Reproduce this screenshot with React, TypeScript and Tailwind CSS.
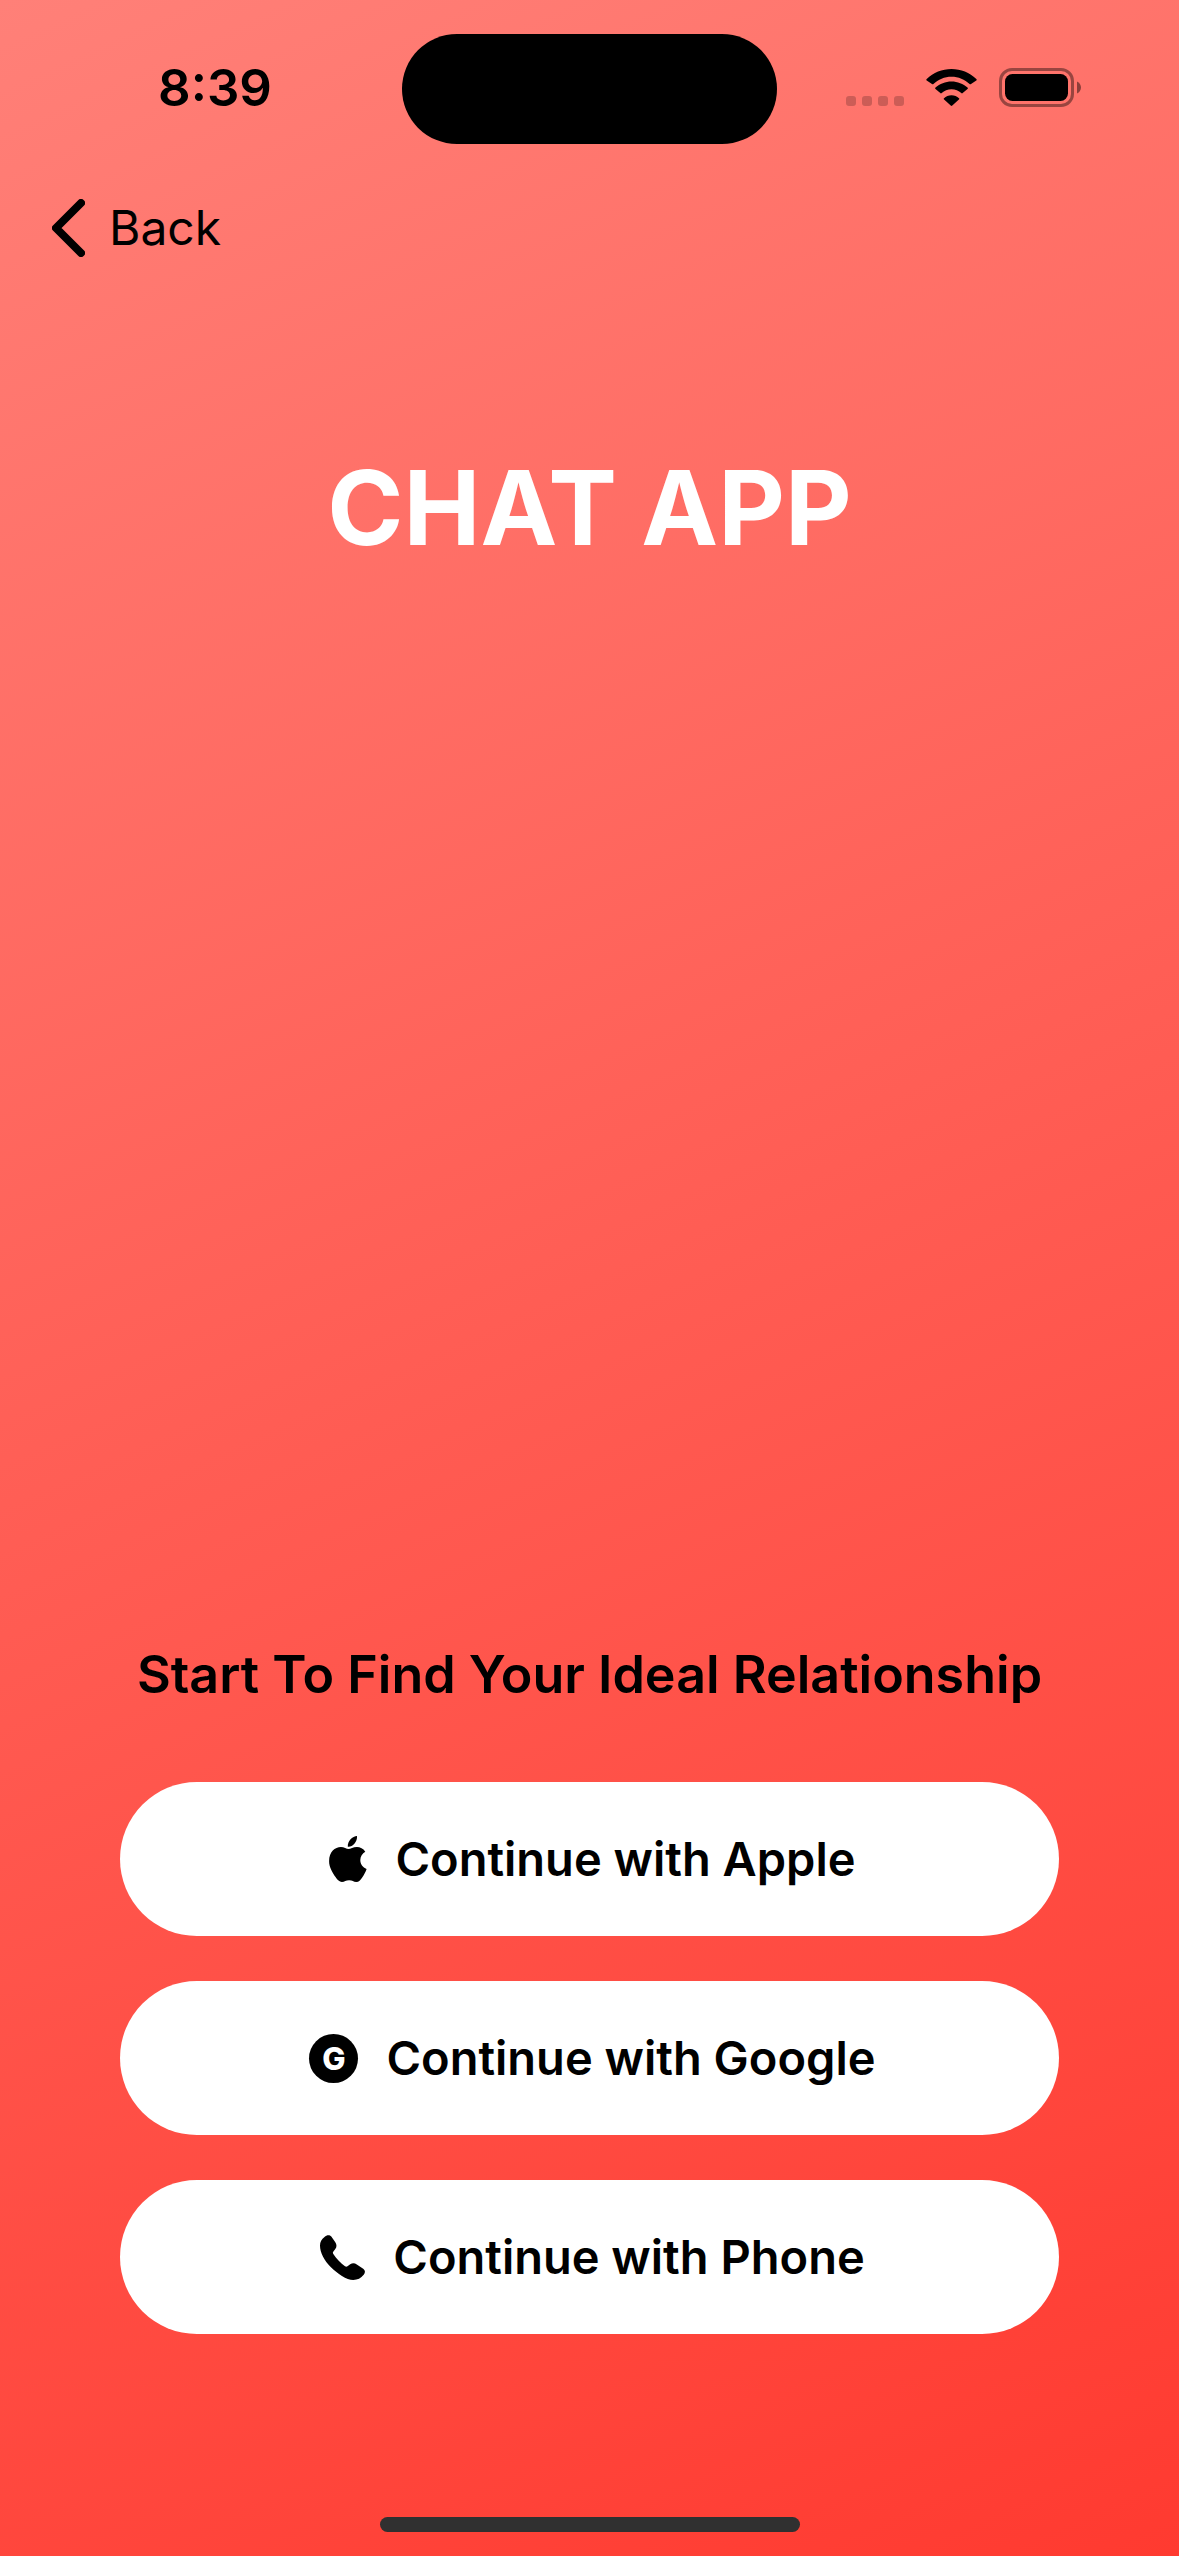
import type { ReactNode } from "react";

function AppleIcon() {
  return (
    <svg viewBox="0 0 38 46" className="h-[46px] w-[38px]" fill="currentColor" aria-hidden="true">
      <path d="M28 0c.3 3-.9 5.700-2.600 7.700-1.800 2-4.300 3.300-6.600 3-.3-2.800 1-5.500 2.600-7.300C23.200 1.400 26 .1 28 0z" />
      <path d="M36.300 15.700c-3 1.800-5 4.700-5 8.300 0 4.200 2.500 7.500 6.300 9-1 3-2.500 5.800-4.400 8.500-1.700 2.400-3.300 4.500-5.900 4.500-2.900 0-3.800-1.700-7.200-1.700-3.300 0-4.500 1.700-7.200 1.700-2.600 0-4.300-2-6.200-4.700C3.200 36.300.1 31 .1 25.200.1 16 6 11.100 11.900 11.100c3.100 0 5.700 2 7.600 2 1.900 0 4.800-2.100 8.400-2.100 3.300 0 6.300 1.500 8.400 4.700z" />
    </svg>
  );
}

function GoogleIcon() {
  return (
    <span
      aria-hidden="true"
      className="flex size-[49px] items-center justify-center rounded-full bg-black text-[31px] leading-none font-extrabold text-white"
    >
      G
    </span>
  );
}

function PhoneIcon() {
  return (
    <svg viewBox="0 0 45 45" className="size-[45px]" fill="currentColor" aria-hidden="true">
      <path d="M4.500 2C6.500.2 9.500-.4 11.300 1.600l4 5.700c1.500 2.200 1.600 4.700 0 6.700l-1.900 2.500c-.7.900-.7 1.600-.1 2.500 3.100 4.900 7.500 9.300 11.700 12.200.9.600 1.700.6 2.500 0l2.700-1.900c2.200-1.500 4.500-1.300 6.600.1l6.400 4.300c2.200 1.600 2.200 4 .5 6.100C40.900 43.200 37.500 45 33.300 45 26.500 45 17.400 38.600 10.700 31.900 4.300 25.500 0 17.400 0 10.400 0 7 1.600 4.300 4.500 2z" />
    </svg>
  );
}

function StatusBar() {
  return (
    <header className="grid grid-cols-[1fr_375px_1fr] items-center pt-[34px]">
      <time className="pb-[3px] pl-[28px] text-center text-[51px] leading-[60px] font-semibold">8:39</time>
      <div className="h-[110px] rounded-full bg-black" />
      <div className="flex items-center justify-end pr-[98px] pb-[3px]">
        <div className="mt-[27px] mr-[22px] flex gap-[6px]">
          <i className="size-[10px] rounded-[3px] bg-black/20" />
          <i className="size-[10px] rounded-[3px] bg-black/20" />
          <i className="size-[10px] rounded-[3px] bg-black/20" />
          <i className="size-[10px] rounded-[3px] bg-black/20" />
        </div>
        <svg viewBox="0 0 51 37" className="mr-[22px] h-[37px] w-[51px]" fill="currentColor" role="img" aria-label="Wi-Fi">
          <path d="M25.500 7.700c6.900 0 13.300 2.700 18.100 7.300.4.400 1 .4 1.400 0l5.300-3.500c.5-.4.500-1.100 0-1.500C43.700 3.600 34.900 0 25.500 0S7.300 3.600.7 10c-.5.400-.5 1.100 0 1.500L6 15c.4.400 1 .4 1.400 0 4.800-4.600 11.200-7.300 18.100-7.300z" />
          <path d="M25.500 20.300c3.800 0 7.200 1.400 9.800 3.800.4.400 1 .4 1.400 0l4.800-4c.5-.4.500-1 0-1.500-4.300-3.900-9.900-6.200-16-6.200s-11.700 2.300-16 6.200c-.5.500-.5 1.100 0 1.500l4.800 4c.4.400 1 .4 1.400 0 2.600-2.400 6-3.800 9.800-3.800z" />
          <path d="M33 29.200c.4.400.4 1-.1 1.400l-6.600 6c-.5.500-1.100.5-1.600 0l-6.600-6c-.5-.4-.5-1-.1-1.400 2-1.900 4.600-3 7.500-3s5.500 1.100 7.500 3z" />
        </svg>
        <svg viewBox="0 0 82 39" className="h-[39px] w-[82px]" role="img" aria-label="Battery full">
          <rect x="1.500" y="1.500" width="72" height="36" rx="11.500" fill="none" stroke="black" strokeOpacity=".4" strokeWidth="3" />
          <rect x="6" y="6" width="63" height="27" rx="7.500" />
          <path d="M78 13.500c2.500 1 4 3.500 4 6s-1.500 5-4 6z" fillOpacity=".45" />
        </svg>
      </div>
    </header>
  );
}

function LoginButton({ icon, children }: { icon: ReactNode; children: ReactNode }) {
  return (
    <button
      type="button"
      className="flex h-[154px] w-full items-center justify-center gap-[28px] rounded-full bg-white pl-[6px] text-[47px] leading-[56px] font-semibold"
    >
      {icon}
      <span>{children}</span>
    </button>
  );
}

export default function App() {
  return (
    <div className="flex min-h-screen flex-col bg-[linear-gradient(155.2deg,#ff8078,#ff3a30)] font-['Inter',sans-serif] text-black">
      <StatusBar />
      <nav className="flex px-[52px] pt-[52px]">
        <button type="button" className="flex items-center gap-[24px] text-[48px] leading-[64px]">
          <svg viewBox="0 0 33 58" className="h-[58px] w-[33px]" fill="none" stroke="currentColor" strokeWidth="8" strokeLinecap="round" strokeLinejoin="round" aria-hidden="true">
            <path d="M29 4 4 29l25 25" />
          </svg>
          Back
        </button>
      </nav>
      <h1 className="mt-[184px] text-center text-[103px] leading-[128px] font-bold text-white">CHAT APP</h1>
      <main className="mt-auto px-[120px]">
        <h2 className="mb-[75px] text-center text-[52px] leading-[64px] font-semibold whitespace-nowrap">
          Start To Find Your Ideal Relationship
        </h2>
        <div className="flex flex-col gap-[45px]">
          <LoginButton icon={<AppleIcon />}>Continue with Apple</LoginButton>
          <LoginButton icon={<GoogleIcon />}>Continue with Google</LoginButton>
          <LoginButton icon={<PhoneIcon />}>Continue with Phone</LoginButton>
        </div>
      </main>
      <footer className="flex justify-center pt-[183px] pb-6">
        <div className="h-[15px] w-[420px] rounded-full bg-[#303030]" />
      </footer>
    </div>
  );
}
